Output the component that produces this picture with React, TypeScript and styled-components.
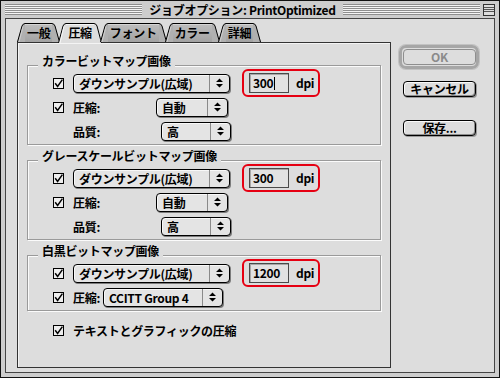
import React from 'react';
import styled, { createGlobalStyle } from 'styled-components';

const GlobalStyle = createGlobalStyle`
  html, body {
    margin: 0;
    padding: 0;
    background: #dcdcdc;
  }
  * {
    box-sizing: border-box;
  }
`;

// Ventana
const Window = styled.div`
  width: 500px;
  height: 378px;
  border: 1px solid #111;
  background: #cdcdcd;
  display: flex;
  flex-direction: column;
  font-family: "Noto Sans CJK JP", "Liberation Sans", sans-serif;
  font-weight: 700;
  font-size: 12px;
  letter-spacing: -0.3px;
  color: #000;
`;

const TitleBar = styled.div`
  height: 17px;
  display: flex;
  align-items: center;
  padding: 0 4px;
`;

const Stripes = styled.div`
  flex: 1;
  height: 11px;
  background: repeating-linear-gradient(to bottom, #8e8e8e 0 1px, #f4f4f4 1px 2px);
`;

const TitleText = styled.div`
  padding: 0 7px;
  line-height: 16px;
  white-space: pre;
`;

const ShadeBox = styled.svg`
  width: 12px;
  height: 12px;
  margin-left: 3px;
  flex-shrink: 0;
`;

const Body = styled.div`
  flex: 1;
  margin: 0 4px 4px 4px;
  border: 1px solid #444;
  background: #dddddd;
  display: flex;
  padding: 4px 0 4px 11px;
`;

const LeftColumn = styled.div`
  width: 374px;
  display: flex;
  flex-direction: column;
`;

// Pestañas
const TabsRow = styled.div`
  height: 20px;
  display: flex;
  align-items: flex-start;
  position: relative;
  z-index: 1;
  margin-bottom: -1px;
`;

const TabWrap = styled.div<{ $active?: boolean }>`
  display: flex;
  height: ${p => (p.$active ? 20 : 19)}px;
  & + & {
    margin-left: -2px;
  }
`;

const TabMiddle = styled.div<{ $active?: boolean }>`
  height: 100%;
  padding: 0 2px;
  border-top: 1px solid #000;
  background: ${p => (p.$active ? '#dddddd' : 'linear-gradient(#bdbdbd, #a2a2a2)')};
  box-shadow: inset 0 1px 0 ${p => (p.$active ? '#f6f6f6' : '#d4d4d4')};
  line-height: 18px;
  white-space: nowrap;
`;

const TabSide = styled.svg`
  width: 8px;
  height: 100%;
  display: block;
  flex-shrink: 0;
`;

const Panel = styled.div`
  flex: 1;
  border: 1px solid #333;
  background: #dddddd;
  box-shadow: inset 1px 1px 0 #f4f4f4;
  padding: 11px 9px 0 9px;
`;

// Grupos
const Group = styled.div`
  & + & {
    margin-top: 4px;
  }
`;

const GroupTitle = styled.div`
  width: fit-content;
  height: 14px;
  line-height: 14px;
  margin: 0 0 -3px 11px;
  padding: 0 4px;
  background: #dddddd;
  position: relative;
  z-index: 1;
`;

const GroupBox = styled.div<{ $h: number }>`
  height: ${p => p.$h}px;
  border: 1px solid #9a9a9a;
  box-shadow: 1px 1px 0 #fbfbfb, inset 1px 1px 0 #fbfbfb;
  padding: 7px 0 0 25px;
`;

const Row = styled.div`
  height: 20px;
  display: flex;
  align-items: center;
  & + & {
    margin-top: 4px;
  }
`;

const CheckBox = styled.span`
  width: 11px;
  height: 11px;
  border: 1px solid #000;
  background: #eeeeee;
  display: flex;
  align-items: center;
  justify-content: center;
  flex-shrink: 0;
  margin-right: 9px;
`;

const CheckSpacer = styled.span`
  width: 11px;
  flex-shrink: 0;
  margin-right: 9px;
`;

const Label = styled.span<{ $w: number }>`
  width: ${p => p.$w}px;
  flex-shrink: 0;
  white-space: nowrap;
`;

const PopupBox = styled.div<{ $w: number }>`
  width: ${p => p.$w}px;
  height: 19px;
  flex-shrink: 0;
  display: flex;
  border: 1px solid #000;
  border-radius: 4px;
  background: #e4e4e4;
  box-shadow: 1px 1px 0 #7c7c7c, inset 1px 1px 0 #f8f8f8;
`;

const PopupText = styled.span`
  flex: 1;
  padding-left: 5px;
  line-height: 17px;
  white-space: nowrap;
  overflow: hidden;
`;

const PopupArrows = styled.span`
  width: 20px;
  border-left: 1px solid #8a8a8a;
  display: flex;
  align-items: center;
  justify-content: center;
`;

const Highlight = styled.div`
  height: 28px;
  margin-left: 12px;
  flex-shrink: 0;
  display: flex;
  align-items: center;
  gap: 7px;
  padding: 0 4px 0 5px;
  border: 2px solid #e60012;
  border-radius: 6px;
`;

const Field = styled.div`
  width: 40px;
  height: 20px;
  display: flex;
  align-items: center;
  padding-left: 3px;
  border: 1px solid #4a4a4a;
  background: #e2e2e2;
  box-shadow: inset 1px 1px 0 #a8a8a8;
  line-height: 16px;
`;

const Caret = styled.span`
  width: 1px;
  height: 13px;
  background: #000;
  margin-left: 1px;
`;

const Unit = styled.span`
  line-height: 16px;
`;

const FooterRow = styled.div`
  display: flex;
  align-items: center;
  height: 16px;
  margin-top: 11px;
  padding-left: 26px;
`;

// Botones
const RightColumn = styled.div`
  display: flex;
  flex-direction: column;
  margin-left: 8px;
  padding-top: 22px;
`;

const DefaultRing = styled.div`
  width: 80px;
  height: 24px;
  border: 3px solid #a6a6a6;
  border-radius: 7px;
  padding: 1px;
  box-shadow: 0 0 0 1px #c2c2c2;
`;

const Button = styled.div<{ $disabled?: boolean }>`
  width: 73px;
  height: 16px;
  border: 1px solid ${p => (p.$disabled ? '#8e8e8e' : '#000')};
  border-radius: 4px;
  background: #dddddd;
  box-shadow: ${p =>
    p.$disabled ? 'none' : 'inset 1px 1px 0 #fafafa, inset -1px -1px 0 #8e8e8e, 1px 1px 0 #9a9a9a'};
  color: ${p => (p.$disabled ? '#8a8a8a' : '#000')};
  text-align: center;
  line-height: 14px;
  white-space: nowrap;
`;

const SideButton = styled(Button)<{ $gap: number }>`
  margin: ${p => p.$gap}px 0 0 4px;
`;

const Check = () => (
  <CheckBox>
    <svg width="9" height="9" viewBox="0 0 9 9">
      <path d="M1.2 4.2 L3.6 7.4 L8.4 0.6" fill="none" stroke="#000" strokeWidth="1.5" />
    </svg>
  </CheckBox>
);

const Popup: React.FC<{ width: number; children: React.ReactNode }> = ({ width, children }) => (
  <PopupBox $w={width}>
    <PopupText>{children}</PopupText>
    <PopupArrows>
      <svg width="7" height="10" viewBox="0 0 7 10">
        <path d="M3.5 0.5 L7 4 L0 4 Z M0 6 L7 6 L3.5 9.5 Z" fill="#000" />
      </svg>
    </PopupArrows>
  </PopupBox>
);

const Tab: React.FC<{ active?: boolean; children: React.ReactNode }> = ({ active, children }) => {
  const h = active ? 20 : 19;
  const fill = active ? '#dddddd' : '#b0b0b0';
  return (
    <TabWrap $active={active}>
      <TabSide viewBox={`0 0 8 ${h}`}>
        <path d={`M0 ${h} L5 3 Q6 0.5 8 0.5 L8 ${h} Z`} fill={fill} />
        <path d={`M0.5 ${h} L5 3 Q6 0.5 8 0.5`} fill="none" stroke="#000" />
        <path d={`M2 ${h} L6 3.5`} fill="none" stroke={active ? '#f6f6f6' : '#cfcfcf'} />
      </TabSide>
      <TabMiddle $active={active}>{children}</TabMiddle>
      <TabSide viewBox={`0 0 8 ${h}`}>
        <path d={`M0 0.5 Q2 0.5 3 3 L8 ${h} L0 ${h} Z`} fill={fill} />
        <path d={`M0 0.5 Q2 0.5 3 3 L7.5 ${h}`} fill="none" stroke="#000" />
      </TabSide>
    </TabWrap>
  );
};

const DpiBox: React.FC<{ value: string; caret?: boolean }> = ({ value, caret }) => (
  <Highlight>
    <Field>
      {value}
      {caret && <Caret />}
    </Field>
    <Unit>dpi</Unit>
  </Highlight>
);

const App: React.FC = () => {
  return (
    <>
      <GlobalStyle />
      <Window>
        <TitleBar>
          <Stripes />
          <TitleText>ジョブオプション: PrintOptimized</TitleText>
          <Stripes />
          <ShadeBox viewBox="0 0 12 12">
            <rect x="0.5" y="0.5" width="11" height="11" fill="#dddddd" stroke="#333" />
            <path d="M1 3.5 H11 M1 5.5 H11 M1 7.5 H11" stroke="#555" />
          </ShadeBox>
        </TitleBar>

        <Body>
          <LeftColumn>
            <TabsRow>
              <Tab>一般</Tab>
              <Tab active>圧縮</Tab>
              <Tab>フォント</Tab>
              <Tab>カラー</Tab>
              <Tab>詳細</Tab>
            </TabsRow>

            <Panel>
              <Group>
                <GroupTitle>カラービットマップ画像</GroupTitle>
                <GroupBox $h={80}>
                  <Row>
                    <Check />
                    <Popup width={157}>ダウンサンプル(広域)</Popup>
                    <DpiBox value="300" caret />
                  </Row>
                  <Row>
                    <Check />
                    <Label $w={83}>圧縮:</Label>
                    <Popup width={72}>自動</Popup>
                  </Row>
                  <Row>
                    <CheckSpacer />
                    <Label $w={88}>品質:</Label>
                    <Popup width={70}>高</Popup>
                  </Row>
                </GroupBox>
              </Group>

              <Group>
                <GroupTitle>グレースケールビットマップ画像</GroupTitle>
                <GroupBox $h={80}>
                  <Row>
                    <Check />
                    <Popup width={157}>ダウンサンプル(広域)</Popup>
                    <DpiBox value="300" />
                  </Row>
                  <Row>
                    <Check />
                    <Label $w={83}>圧縮:</Label>
                    <Popup width={72}>自動</Popup>
                  </Row>
                  <Row>
                    <CheckSpacer />
                    <Label $w={88}>品質:</Label>
                    <Popup width={70}>高</Popup>
                  </Row>
                </GroupBox>
              </Group>

              <Group>
                <GroupTitle>白黒ビットマップ画像</GroupTitle>
                <GroupBox $h={56}>
                  <Row>
                    <Check />
                    <Popup width={157}>ダウンサンプル(広域)</Popup>
                    <DpiBox value="1200" />
                  </Row>
                  <Row>
                    <Check />
                    <Label $w={30}>圧縮:</Label>
                    <Popup width={120}>CCITT Group 4</Popup>
                  </Row>
                </GroupBox>
              </Group>

              <FooterRow>
                <Check />
                <span>テキストとグラフィックの圧縮</span>
              </FooterRow>
            </Panel>
          </LeftColumn>

          <RightColumn>
            <DefaultRing>
              <Button $disabled>OK</Button>
            </DefaultRing>
            <SideButton $gap={12}>キャンセル</SideButton>
            <SideButton $gap={23}>保存...</SideButton>
          </RightColumn>
        </Body>
      </Window>
    </>
  );
};

export default App;
